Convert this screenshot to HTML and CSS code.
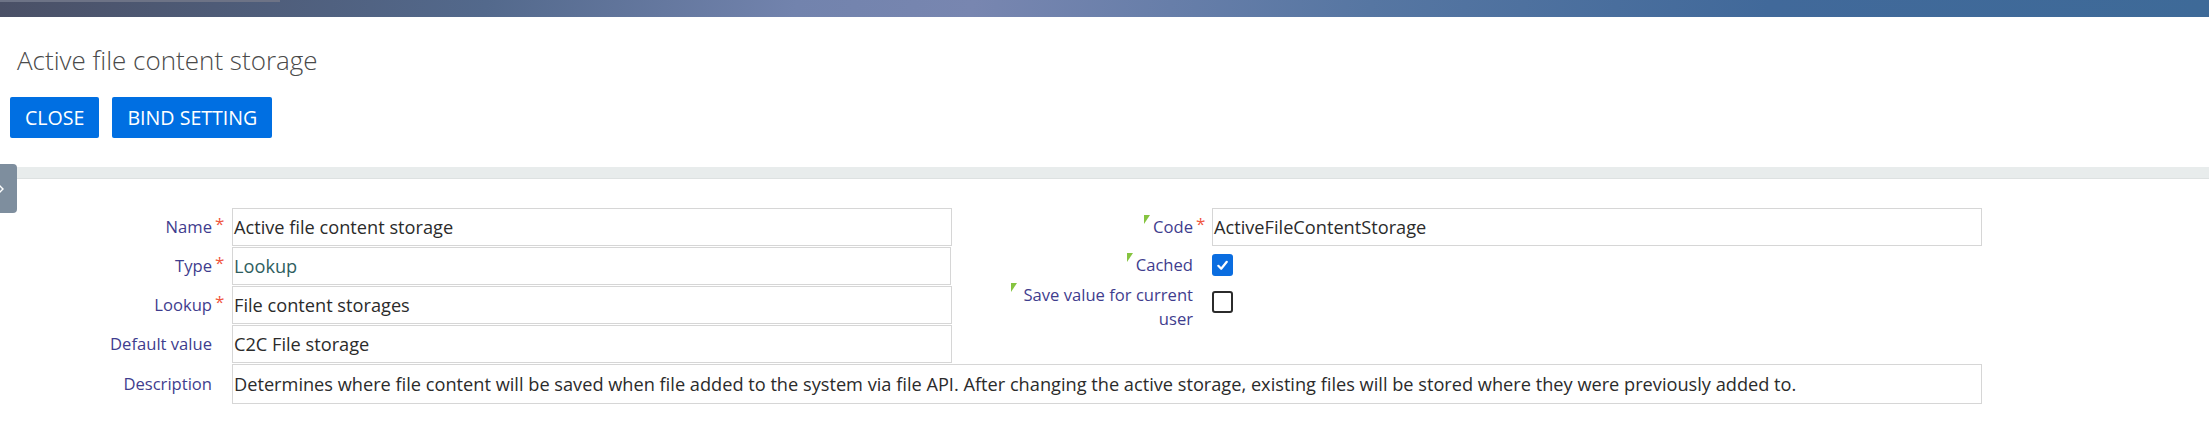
FILE: index.html
```html
<!DOCTYPE html>
<html lang="en">

<head>
    <meta charset="UTF-8" />
    <meta name="viewport" content="width=device-width, initial-scale=1.0" />
    <title>Active file content storage</title>
    <link rel="stylesheet" href="styles.css">
</head>

<body>
    <div class="topbar"></div>

    <header class="page-head">
        <h1 class="page-title">Active file content storage</h1>
        <div class="actions">
            <button class="btn">Close</button>
            <button class="btn">Bind setting</button>
        </div>
    </header>

    <div class="divider">
        <a class="side-toggle" href="#">
            <svg width="12" height="14" viewBox="0 0 12 14">
                <path d="M1 2 L6 7 L1 12" fill="none" stroke="#fff" stroke-width="1.4" />
            </svg>
        </a>
    </div>

    <main class="card">
        <div class="cols">
            <div class="col col-left">
                <div class="row">
                    <label class="lbl">Name</label><span class="req">*</span>
                    <div class="field">Active file content storage</div>
                </div>
                <div class="row">
                    <label class="lbl">Type</label><span class="req">*</span>
                    <div class="field field-lookup">Lookup</div>
                </div>
                <div class="row">
                    <label class="lbl">Lookup</label><span class="req">*</span>
                    <div class="field">File content storages</div>
                </div>
                <div class="row">
                    <label class="lbl">Default value</label><span class="req"></span>
                    <div class="field">C2C File storage</div>
                </div>
            </div>

            <div class="col col-right">
                <div class="row row-code">
                    <div class="lbl-cell"><label class="lbl lbl-mark">Code</label></div><span class="req">*</span>
                    <div class="field">ActiveFileContentStorage</div>
                </div>
                <div class="row row-check">
                    <div class="lbl-cell"><label class="lbl lbl-mark">Cached</label></div><span class="req"></span>
                    <div class="check-cell">
                        <span class="check on">
                            <svg width="21" height="22" viewBox="0 0 21 22">
                                <path d="M6.3 11.8 L9.2 14.8 L14.8 7.8" fill="none" stroke="#fff" stroke-width="2.2" stroke-linecap="round" stroke-linejoin="round" />
                            </svg>
                        </span>
                    </div>
                </div>
                <div class="row row-save">
                    <div class="lbl-cell"><label class="lbl lbl-mark">Save value for current user</label></div><span class="req"></span>
                    <div class="check-cell"><span class="check"></span></div>
                </div>
            </div>
        </div>

        <div class="row row-desc">
            <label class="lbl">Description</label><span class="req"></span>
            <div class="field field-desc">Determines where file content will be saved when file added to the system via file API. After changing the active storage, existing files will be stored where they were previously added to.</div>
        </div>
    </main>
</body>

</html>
```

FILE: styles.css
```css
*,
::after,
::before {
    box-sizing: border-box;
    padding: 0;
    margin: 0;
}

body {
    background-color: #fff;
    font-family: "Open Sans", "Liberation Sans", sans-serif;
    color: #2b2b2b;
}

.topbar {
    height: 17px;
    background:
        linear-gradient(#6d7386, #6d7386) 0 0 / 280px 2px no-repeat,
        linear-gradient(100deg, #4a5066 0%, #53698c 22%, #7283ad 36%, #7886b0 44%, #5676a2 62%, #41699a 80%, #3e6a98 100%);
}

.page-head {
    padding: 25px 10px 0;
}

.page-title {
    padding-left: 7px;
    font-size: 26px;
    font-weight: 300;
    line-height: 36px;
    color: #4a4a4a;
}

.actions {
    display: flex;
    gap: 13px;
    margin-top: 19px;
}

.btn {
    height: 41px;
    padding: 0 15px;
    border: none;
    border-radius: 2px;
    background-color: #006fe2;
    color: #fff;
    font-family: inherit;
    font-size: 19.6px;
    text-transform: uppercase;
}

.divider {
    position: relative;
    height: 12px;
    margin-top: 29px;
    background-color: #e8ecec;
    border-bottom: 1px solid #dde1e1;
}

.side-toggle {
    position: absolute;
    left: 0;
    top: -3px;
    width: 17px;
    height: 49px;
    display: flex;
    align-items: center;
    background-color: #7e8e9e;
    border-radius: 0 4px 4px 0;

    svg {
        margin-left: -3px;
    }
}

.card {
    padding-top: 28px;
}

.cols {
    display: flex;
    gap: 53px;
}

.row {
    display: grid;
    align-items: center;
    height: 39px;
}

.col-left .row {
    grid-template-columns: 212px 20px 720px;
}

.col-right .row {
    grid-template-columns: 188px 19px 770px;
}

.row-desc {
    grid-template-columns: 212px 20px 1750px;
    height: 41px;
}

.lbl {
    font-size: 16.6px;
    line-height: 24px;
    color: #3f3d8e;
    text-align: right;
}

.req {
    align-self: start;
    padding: 8px 0 0 3px;
    font-size: 17px;
    line-height: 17px;
    color: #f0573f;
}

.field {
    height: 38px;
    padding: 0 1px;
    border: 1px solid #d6d6d6;
    font-size: 18.2px;
    line-height: 36px;
    white-space: nowrap;
    overflow: hidden;
}

.field-lookup {
    color: #2f5e5f;
    width: 719px;
}

.field-desc {
    height: 40px;
    line-height: 38px;
}

/* right column: labels with the green corner mark */
.lbl-cell {
    display: flex;
    justify-content: flex-end;
}

.lbl-mark {
    position: relative;
    display: inline-block;
    max-width: 182px;
    padding-left: 9px;

    &::before {
        content: "";
        position: absolute;
        left: 0;
        top: 0;
        border-top: 9px solid #86c440;
        border-right: 6px solid transparent;
    }
}

.row-check {
    height: 37px;
}

.row-save {
    height: auto;
    align-items: start;
}

.check-cell {
    display: flex;
}

.check {
    width: 21px;
    height: 22px;
    border: 2.5px solid #2b2b2b;
    border-radius: 3px;
}

.row-save .check {
    margin-top: 8px;
}

.check.on {
    border: none;
    background-color: #0a6de0;
}
```
